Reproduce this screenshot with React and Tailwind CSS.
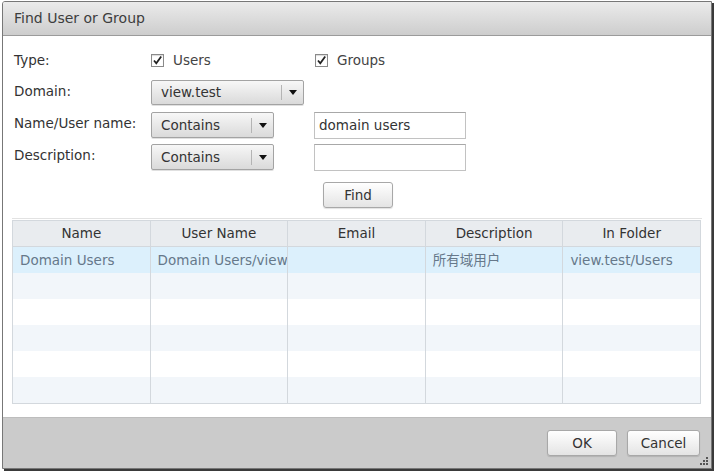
import React from "react";

const font = { fontFamily: '"DejaVu Sans", "Noto Sans CJK SC", sans-serif' };

const CheckBox = ({ label }) => (
  <div className="flex items-center">
    <div className="w-[13px] h-[13px] border border-[#8a8a8a] bg-white flex items-center justify-center shadow-[inset_0_1px_1px_rgba(0,0,0,0.15)]">
      <svg width="11" height="11" viewBox="0 0 11 11">
        <path d="M2 5.5 L4.3 8.3 L9.2 1.5" fill="none" stroke="#222" strokeWidth="1.8" />
      </svg>
    </div>
    <span className="ml-[9px] text-[#444]">{label}</span>
  </div>
);

const Select = ({ value, w, h }) => (
  <div
    className={`${w} ${h} flex items-center border border-[#a3a3a3] rounded-[2px] bg-gradient-to-b from-[#f7f7f7] to-[#dadada] shadow-[0_1px_0_#e0e0e0]`}
  >
    <span className="flex-1 pl-[9px] text-[#333]">{value}</span>
    <div className="w-px h-[15px] bg-[#b4b4b4]" />
    <div className="w-[21px] flex justify-center">
      <svg width="8" height="5" viewBox="0 0 8 5">
        <path d="M0 0 H8 L4 5 Z" fill="#111" />
      </svg>
    </div>
  </div>
);

const TextBox = ({ value }) => (
  <div className="w-[152px] h-[27px] border border-[#c2c2c2] border-t-[#a8a8a8] bg-white flex items-center pl-[4px] text-[#333]">
    {value}
  </div>
);

const Button = ({ children, w }) => (
  <div
    className={`${w} h-[26px] border border-[#a8a8a8] rounded-[3px] bg-gradient-to-b from-[#ffffff] to-[#e4e4e4] flex items-center justify-center text-[#333] shadow-[0_1px_1px_rgba(0,0,0,0.12)]`}
  >
    {children}
  </div>
);

const columns = ["Name", "User Name", "Email", "Description", "In Folder"];
const rows = [
  ["Domain Users", "Domain Users/view", "", "所有域用户", "view.test/Users"],
  ["", "", "", "", ""],
  ["", "", "", "", ""],
  ["", "", "", "", ""],
  ["", "", "", "", ""],
  ["", "", "", "", ""],
];
const rowBg = ["bg-[#dcf0fc]", "bg-[#f2f6fa]", "bg-white", "bg-[#f2f6fa]", "bg-white", "bg-[#f2f6fa]"];

export default function App() {
  return (
    <div className="w-[717px] h-[473px] bg-white pt-px pl-[2px] text-[13.5px]" style={font}>
      <div className="w-[710px] h-[468px] flex flex-col border border-[#777] rounded-tl-[3px] shadow-[2px_2px_0_#3a3a3a] bg-white overflow-hidden">
        {/* title bar */}
        <div className="h-[34px] shrink-0 flex items-center pl-[11px] bg-gradient-to-b from-[#ebebeb] to-[#cdcdcd] border-b border-[#9b9b9b] text-[#3d3d3d] text-[14px]">
          Find User or Group
        </div>

        {/* form */}
        <div className="flex flex-col pl-[11px] pt-[14px]">
          <div className="flex items-center h-[20px]">
            <span className="w-[137px] text-[#333]">Type:</span>
            <div className="w-[164px]">
              <CheckBox label="Users" />
            </div>
            <CheckBox label="Groups" />
          </div>

          <div className="flex items-center h-[25px] mt-[10px]">
            <span className="w-[137px] text-[#333] -mt-[3px]">Domain:</span>
            <Select value="view.test" w="w-[153px]" h="h-[25px]" />
          </div>

          <div className="flex items-center h-[26px] mt-[7px]">
            <span className="w-[137px] text-[#333] -mt-[3px]">Name/User name:</span>
            <Select value="Contains" w="w-[123px]" h="h-[26px]" />
            <div className="ml-[40px]">
              <TextBox value="domain users" />
            </div>
          </div>

          <div className="flex items-center h-[26px] mt-[6px]">
            <span className="w-[137px] text-[#333] -mt-[3px]">Description:</span>
            <Select value="Contains" w="w-[123px]" h="h-[26px]" />
            <div className="ml-[40px]">
              <TextBox value="" />
            </div>
          </div>

          <div className="flex mt-[12px] pl-[309px]">
            <Button w="w-[70px]">Find</Button>
          </div>
        </div>

        <div className="mx-[9px] mt-[10px] h-px bg-[#e2e2e2]" />

        {/* results table */}
        <div className="ml-[9px] mt-px w-[689px] border border-[#d3d8dd]">
          <div className="flex h-[26px] bg-[#e9ecef] border-b border-[#d3d8dd]">
            {columns.map((c, i) => (
              <div
                key={c}
                className={`flex-1 flex items-center justify-center text-[#333] ${i < 4 ? "border-r border-[#d3d8dd]" : ""}`}
              >
                {c}
              </div>
            ))}
          </div>
          {rows.map((r, ri) => (
            <div key={ri} className={`flex h-[26px] ${rowBg[ri]}`}>
              {r.map((cell, ci) => (
                <div
                  key={ci}
                  className={`flex-1 min-w-0 overflow-hidden whitespace-nowrap flex items-center pl-[7px] text-[#66788a] ${ci < 4 ? "border-r border-[#d3d8dd]" : ""}`}
                >
                  {cell}
                </div>
              ))}
            </div>
          ))}
        </div>

        {/* footer */}
        <div className="relative mt-auto h-[51px] bg-[#cbcbcb] border-t border-[#bdbdbd] flex justify-end items-start pt-[12px] pr-[11px] gap-[10px]">
          <Button w="w-[70px]">OK</Button>
          <Button w="w-[73px]">Cancel</Button>
          <svg className="absolute right-[2px] bottom-[2px]" width="10" height="10" viewBox="0 0 10 10">
            <rect x="7" y="1" width="2" height="2" fill="#555" />
            <rect x="4" y="4" width="2" height="2" fill="#555" />
            <rect x="7" y="4" width="2" height="2" fill="#555" />
            <rect x="1" y="7" width="2" height="2" fill="#555" />
            <rect x="4" y="7" width="2" height="2" fill="#555" />
            <rect x="7" y="7" width="2" height="2" fill="#555" />
          </svg>
        </div>
      </div>
    </div>
  );
}
